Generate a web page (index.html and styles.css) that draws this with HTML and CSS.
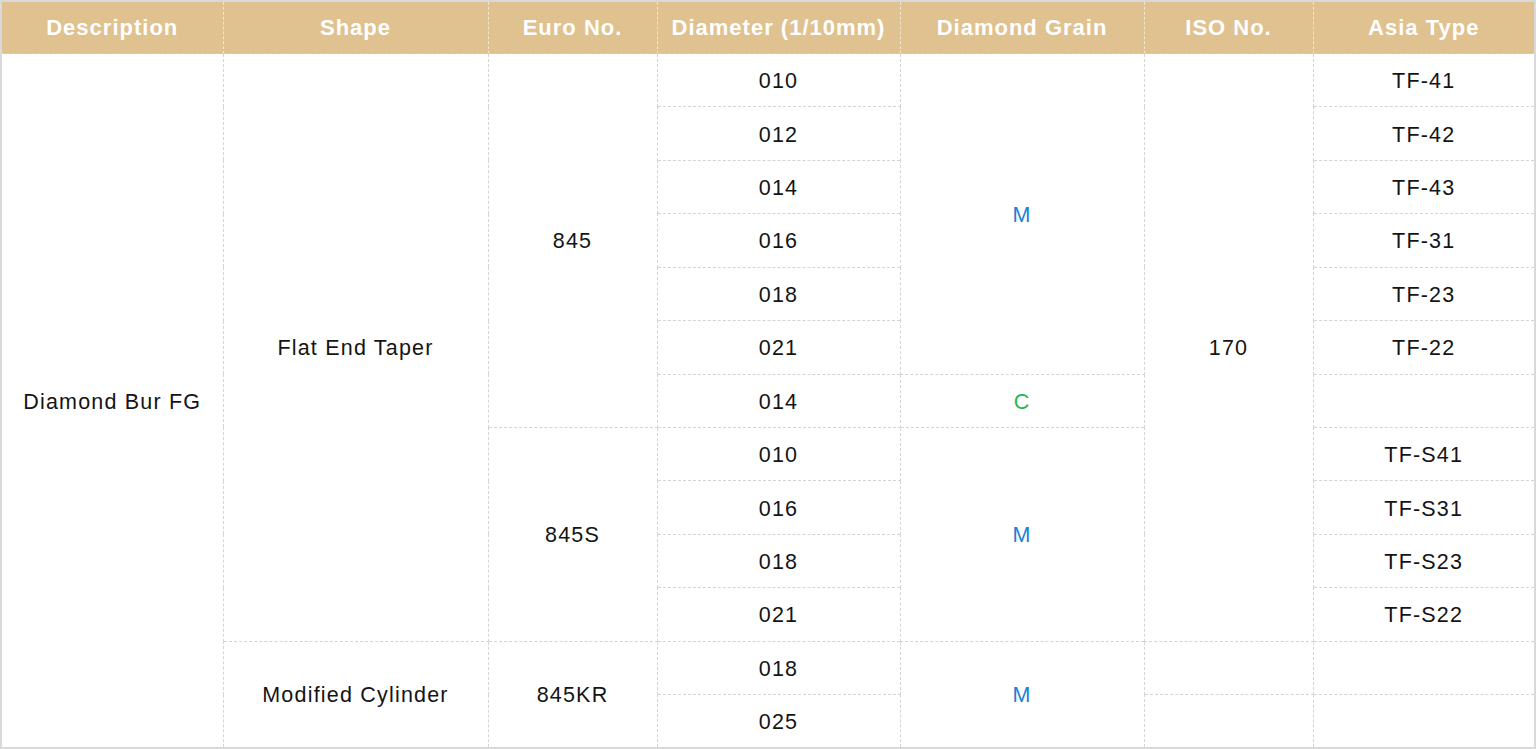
FILE: index.html
```html
<!DOCTYPE html>
<html>
<head>
<meta charset="utf-8">
<link rel="stylesheet" href="styles.css">
</head>
<body>
<table class="spec">
  <colgroup>
    <col class="c1"><col class="c2"><col class="c3"><col class="c4"><col class="c5"><col class="c6"><col class="c7">
  </colgroup>
  <thead>
    <tr>
      <th>Description</th><th>Shape</th><th>Euro No.</th><th>Diameter (1/10mm)</th><th>Diamond Grain</th><th>ISO No.</th><th>Asia Type</th>
    </tr>
  </thead>
  <tbody>
    <tr>
      <td rowspan="13">Diamond Bur FG</td>
      <td rowspan="11">Flat End Taper</td>
      <td rowspan="7">845</td>
      <td>010</td>
      <td rowspan="6" class="m">M</td>
      <td rowspan="11">170</td>
      <td>TF-41</td>
    </tr>
    <tr><td>012</td><td>TF-42</td></tr>
    <tr><td>014</td><td>TF-43</td></tr>
    <tr><td>016</td><td>TF-31</td></tr>
    <tr><td>018</td><td>TF-23</td></tr>
    <tr><td>021</td><td>TF-22</td></tr>
    <tr><td>014</td><td class="c">C</td><td></td></tr>
    <tr><td rowspan="4">845S</td><td>010</td><td rowspan="4" class="m">M</td><td>TF-S41</td></tr>
    <tr><td>016</td><td>TF-S31</td></tr>
    <tr><td>018</td><td>TF-S23</td></tr>
    <tr><td>021</td><td>TF-S22</td></tr>
    <tr><td rowspan="2">Modified Cylinder</td><td rowspan="2">845KR</td><td>018</td><td rowspan="2" class="m">M</td><td></td><td></td></tr>
    <tr><td>025</td><td></td><td></td></tr>
  </tbody>
</table>
</body>
</html>
```

FILE: styles.css
```css
html, body {
  margin: 0;
  padding: 0;
  background: #ffffff;
}
.spec {
  width: 1536px;
  height: 749px;
  table-layout: fixed;
  border-collapse: collapse;
  border: 2px solid #d9d9d9;
  font-family: "Liberation Sans", Arial, sans-serif;
  font-size: 21.5px;
  color: #141414;
}
.c1 { width: 222px; }
.c2 { width: 265px; }
.c3 { width: 169px; }
.c4 { width: 243px; }
.c5 { width: 244px; }
.c6 { width: 169px; }
.c7 { width: 222px; }
.spec th {
  background: #dfc28f;
  color: #ffffff;
  font-weight: bold;
  font-size: 22px;
  letter-spacing: 1px;
  height: 51px;
  padding: 0;
  border-left: 1px dashed #f1e6d0;
  border-right: 1px dashed #f1e6d0;
  border-bottom: 1px dashed #cfcfcf;
}
.spec td {
  text-align: center;
  vertical-align: middle;
  padding: 3px 0 0;
  letter-spacing: 1.2px;
  border: 1px dashed #d4d4d4;
}
.spec tbody tr {
  height: 53.3px;
}
.spec td.m { color: #1a7fd4; }
.spec td.c { color: #1db954; }
```
